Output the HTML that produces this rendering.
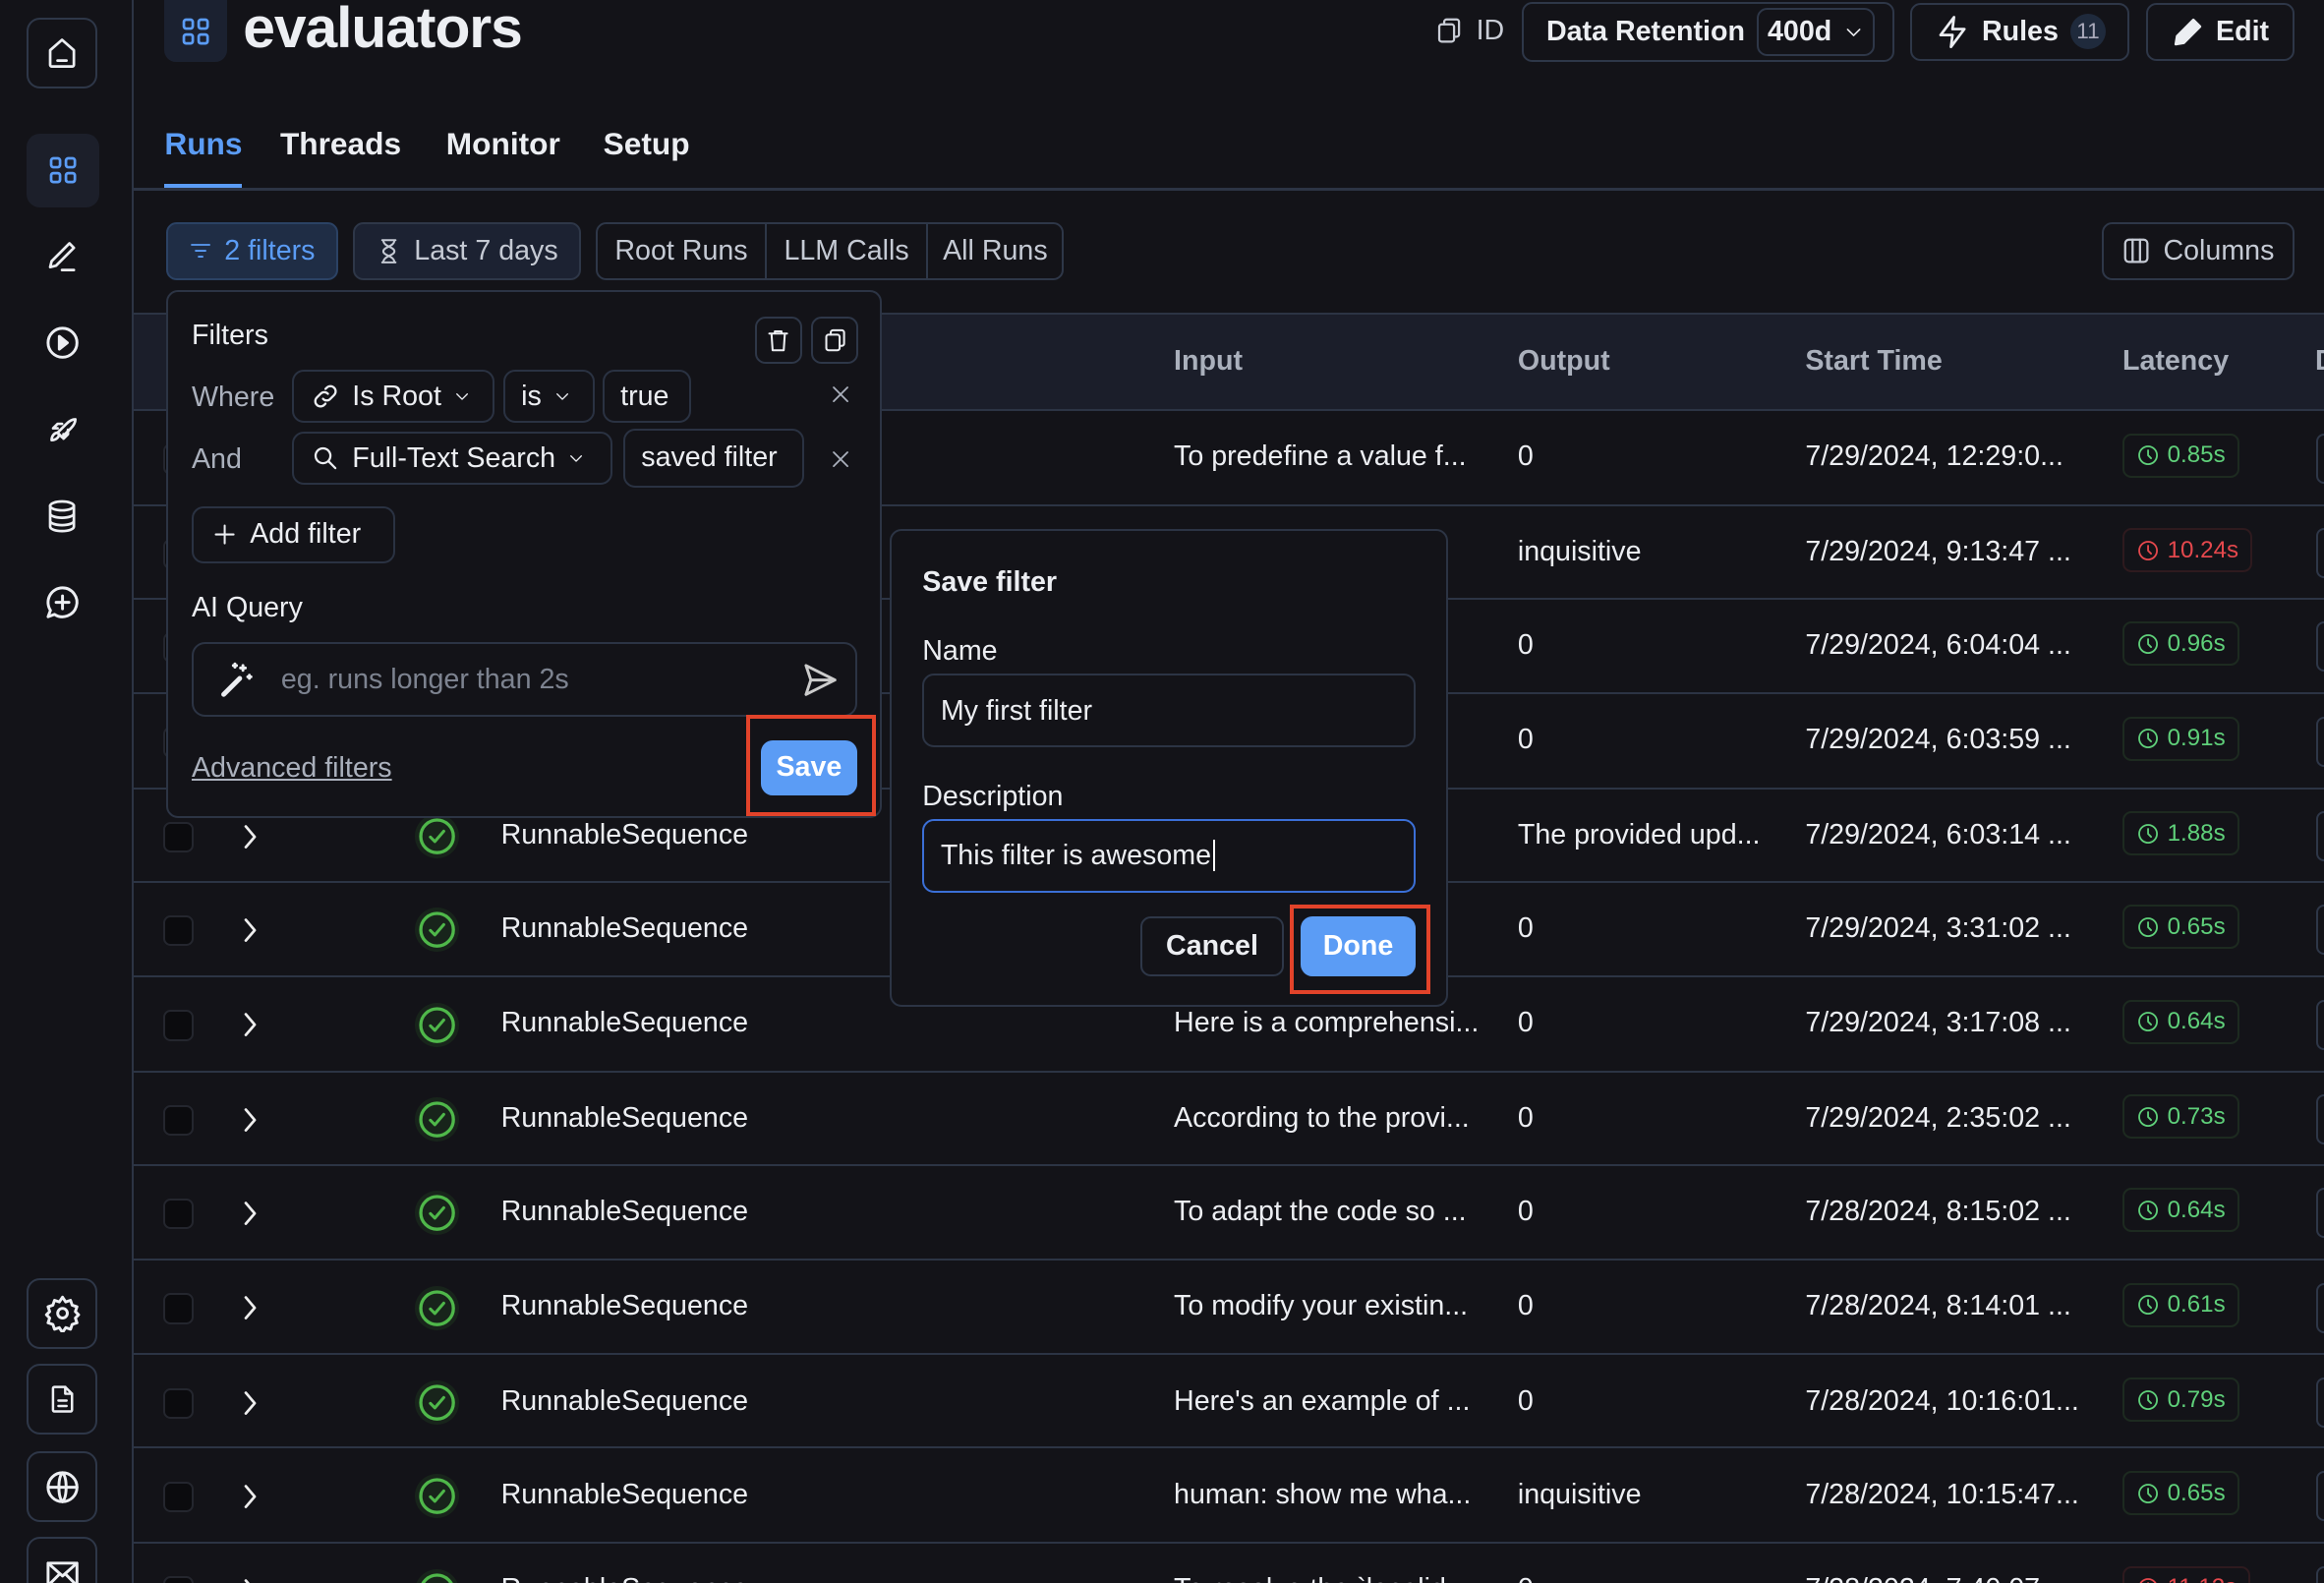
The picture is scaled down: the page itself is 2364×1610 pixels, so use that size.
<!DOCTYPE html>
<html><head><meta charset="utf-8"><style>
*{box-sizing:border-box;margin:0;padding:0}
html,body{width:2364px;height:1610px;overflow:hidden;background:#131318}
#w{zoom:1.50765;width:1568px;height:1068px;position:relative;font-family:"Liberation Sans",sans-serif;color:#eceef2;font-size:19px;overflow:hidden}
.a{position:absolute}
.side{left:0;top:0;width:90px;height:1068px;border-right:1.5px solid #2c3444;background:#131318}
.sb{position:absolute;left:18px;width:48px;height:48px;border:1.5px solid #2e3748;border-radius:9px;display:flex;align-items:center;justify-content:center}
.si{position:absolute;left:18px;width:48px;height:48px;display:flex;align-items:center;justify-content:center}
svg{fill:none;stroke:currentColor;stroke-width:1.8;stroke-linecap:round;stroke-linejoin:round}
.btn{position:absolute;border:1.5px solid #2e3748;border-radius:7px;display:flex;align-items:center;justify-content:center;gap:8px;white-space:nowrap}
.row{position:absolute;left:90px;width:1478px;height:64px;border-top:1.5px solid #2c3444}
.row>div{position:absolute;top:20px;white-space:nowrap}
.cb{left:20px!important;top:22px!important;width:21px;height:21px;border:1.5px solid #24262e;border-radius:5px;background:#0b0b0e}
.chev{left:72px!important;top:22px!important;color:#eee}
.ok{left:190px!important;top:17px!important;width:30px;height:30px;border-radius:50%;background:#18241b;display:flex;align-items:center;justify-content:center;color:#4fb84a}
.nm{left:248px}
.in{left:702px}
.out{left:934px}
.st{left:1128px}
.lat{left:1342px!important;top:15px!important;height:30px;padding:0 8px;border:1.5px solid #1d2a20;border-radius:6px;color:#5fd07a;font-size:16px;display:flex;align-items:center;gap:5px}
.lat.r{color:#e5484d;border-color:#2e1a1e}
.edge{left:1473px!important;top:15px!important;width:10px;height:34px;border:1.5px solid #2e3748;border-radius:6px}
.pill{position:absolute;height:36px;border:1.5px solid #2a3242;border-radius:8px;display:flex;align-items:center;padding:0 11px;gap:8px;white-space:nowrap}
.lbl{color:#aab0bc}
</style></head><body><div id="w">

<div class="a side">
 <div class="sb" style="top:12px"><svg width="24" height="24" viewBox="0 0 24 24"><path d="M4 10l8-7 8 7v10a1 1 0 0 1-1 1H5a1 1 0 0 1-1-1z"/><path d="M9 17h6"/></svg></div>
 <div class="si" style="top:90px;background:#1c1f2a;border-radius:9px;width:49px;height:50px;color:#5b9cf5"><svg width="24" height="24" viewBox="0 0 24 24"><rect x="4" y="4" width="6" height="6" rx="1.5"/><rect x="14" y="4" width="6" height="6" rx="1.5"/><rect x="4" y="14" width="6" height="6" rx="1.5"/><rect x="14" y="14" width="6" height="6" rx="1.5"/></svg></div>
 <div class="si" style="top:149px"><svg width="24" height="24" viewBox="0 0 24 24"><path d="M17 3l3 3L8 18l-4 1 1-4z"/><path d="M12 21h8"/></svg></div>
 <div class="si" style="top:207px"><svg width="26" height="26" viewBox="0 0 24 24"><circle cx="12" cy="12" r="9"/><path d="M10 8l5 4-5 4z" fill="currentColor"/></svg></div>
 <div class="si" style="top:266px"><svg width="24" height="24" viewBox="0 0 24 24"><path d="M5 19c0-3 2-5 4-5l1 1c0 2-2 4-5 4z"/><path d="M9 14l6-6c2-2 4-3 6-3 0 2-1 4-3 6l-6 6z"/><path d="M9 11H6l3-3h3M13 15v3l3-3v-3"/></svg></div>
 <div class="si" style="top:324px"><svg width="24" height="24" viewBox="0 0 24 24"><ellipse cx="12" cy="5" rx="8" ry="3"/><path d="M4 5v14c0 1.7 3.6 3 8 3s8-1.3 8-3V5M4 10c0 1.7 3.6 3 8 3s8-1.3 8-3M4 15c0 1.7 3.6 3 8 3s8-1.3 8-3"/></svg></div>
 <div class="si" style="top:382px"><svg width="26" height="26" viewBox="0 0 24 24"><path d="M12 3a9 9 0 1 1-5 16.5L3 21l1.5-4A9 9 0 0 1 12 3z"/><path d="M12 8v8M8 12h8"/></svg></div>
 <div class="sb" style="top:862px"><svg width="26" height="26" viewBox="0 0 24 24"><circle cx="12" cy="12" r="3"/><path d="M12 2l2 3 3-1 1 3 3 1-1 3 2 2-2 2 1 3-3 1-1 3-3-1-2 3-2-3-3 1-1-3-3-1 1-3-2-2 2-2-1-3 3-1 1-3 3 1z"/></svg></div>
 <div class="sb" style="top:920px"><svg width="22" height="24" viewBox="0 0 24 24"><path d="M6 3h8l5 5v12a1 1 0 0 1-1 1H6a1 1 0 0 1-1-1V4a1 1 0 0 1 1-1z"/><path d="M14 3v5h5M9 13h6M9 17h6"/></svg></div>
 <div class="sb" style="top:979px"><svg width="26" height="26" viewBox="0 0 24 24"><circle cx="12" cy="12" r="9"/><path d="M3 12h18M12 3c3 3 3 15 0 18M12 3c-3 3-3 15 0 18"/></svg></div>
 <div class="sb" style="top:1037px"><svg width="26" height="26" viewBox="0 0 24 24"><rect x="3" y="6" width="18" height="14" rx="1"/><path d="M3 6l9 8 9-8M3 20l7-7M21 20l-7-7"/></svg></div>
</div>

<div class="a" style="left:111px;top:0;width:42px;height:42px;background:#1b2130;border-radius:0 0 8px 8px;display:flex;align-items:center;justify-content:center;color:#5b9cf5"><svg width="24" height="24" viewBox="0 0 24 24"><rect x="4" y="4" width="6" height="6" rx="1.5"/><rect x="14" y="4" width="6" height="6" rx="1.5"/><rect x="4" y="14" width="6" height="6" rx="1.5"/><rect x="14" y="14" width="6" height="6" rx="1.5"/></svg></div>
<div class="a" style="left:164px;top:-3px;font-size:39px;font-weight:bold;letter-spacing:-0.7px">evaluators</div>
<div class="a" style="left:968px;top:10px;display:flex;gap:8px;align-items:center;color:#c9cdd6;font-size:19px"><svg width="20" height="20" viewBox="0 0 24 24"><rect x="4" y="7" width="12" height="14" rx="2"/><path d="M8 7V5a2 2 0 0 1 2-2h8a2 2 0 0 1 2 2v10a2 2 0 0 1-2 2h-2"/></svg>ID</div>
<div class="btn" style="left:1027px;top:1px;width:251px;height:41px;justify-content:flex-start;padding-left:15px;font-weight:bold;font-size:19px">Data Retention <span style="border:1.5px solid #2e3748;border-radius:7px;padding:4px 6px;display:flex;gap:8px;align-items:center">400d <svg width="14" height="14" viewBox="0 0 24 24"><path d="M5 9l7 7 7-7"/></svg></span></div>
<div class="btn" style="left:1289px;top:2px;width:148px;height:39px;font-weight:bold;font-size:19px"><svg width="24" height="26" viewBox="0 0 24 24"><path d="M13 2L4 14h8l-1 8 9-12h-8z"/></svg>Rules<span style="background:#1f2a3c;border-radius:50%;width:24px;height:24px;font-size:15px;font-weight:normal;display:flex;align-items:center;justify-content:center;color:#aab">11</span></div>
<div class="btn" style="left:1448px;top:2px;width:100px;height:39px;font-weight:bold;font-size:19px"><svg width="22" height="22" viewBox="0 0 24 24"><path d="M16 3l5 5L9 20l-6 1 1-6z" fill="currentColor"/></svg>Edit</div>

<div class="a" style="left:111px;top:85px;font-size:21px;font-weight:bold;color:#5b9cf5">Runs</div>
<div class="a" style="left:111px;top:124px;width:52px;height:4px;background:#5b9cf5"></div>
<div class="a" style="left:189px;top:85px;font-size:21px;font-weight:bold">Threads</div>
<div class="a" style="left:301px;top:85px;font-size:21px;font-weight:bold">Monitor</div>
<div class="a" style="left:407px;top:85px;font-size:21px;font-weight:bold">Setup</div>
<div class="a" style="left:90px;top:127px;width:1478px;height:1.5px;background:#2c3444"></div>

<div class="btn" style="left:112px;top:150px;width:116px;height:39px;background:#1f2d45;border-color:#2b4264;color:#5b9cf5;font-size:19px"><svg width="16" height="16" viewBox="0 0 24 24"><path d="M3 6h18M7 12h10M10 18h4"/></svg>2 filters</div>
<div class="btn" style="left:238px;top:150px;width:154px;height:39px;background:#1c2232;color:#c5cad4;font-size:19px"><svg width="18" height="22" viewBox="0 0 24 24"><path d="M6 2h12M6 22h12M7 2c0 6 10 6 10 10S7 16 7 22M17 2c0 6-10 6-10 10s10 4 10 10"/></svg>Last 7 days</div>
<div class="btn" style="left:402px;top:150px;width:316px;height:39px;gap:0;color:#c5cad4;font-size:19px;justify-content:flex-start">
 <span style="width:114px;height:100%;display:flex;align-items:center;justify-content:center;border-right:1.5px solid #2e3748">Root Runs</span><span style="width:109px;height:100%;display:flex;align-items:center;justify-content:center;border-right:1.5px solid #2e3748">LLM Calls</span><span style="flex:1;text-align:center">All Runs</span></div>
<div class="btn" style="left:1418px;top:150px;width:130px;height:39px;color:#c5cad4;font-size:19px"><svg width="20" height="20" viewBox="0 0 24 24"><rect x="3" y="3" width="18" height="18" rx="3"/><path d="M9 3v18M15 3v18"/></svg>Columns</div>

<div class="a" style="left:90px;top:211px;width:1478px;height:65px;background:#1b1e2a;border-top:1.5px solid #2c3444"></div>
<div class="a lbl" style="left:792px;top:233px;font-weight:bold">Input</div>
<div class="a lbl" style="left:1024px;top:233px;font-weight:bold">Output</div>
<div class="a lbl" style="left:1218px;top:233px;font-weight:bold">Start Time</div>
<div class="a lbl" style="left:1432px;top:233px;font-weight:bold">Latency</div>
<div class="a lbl" style="left:1562px;top:233px;font-weight:bold">D</div>

<div id="rows"></div>
<div class="row" style="top:276px"><div class="cb"></div><div class="chev"><svg width="14" height="20" viewBox="0 0 14 20"><path d="M4 3l6 7-6 7"/></svg></div><div class="ok"><svg width="30" height="30" viewBox="0 0 30 30"><circle cx="15" cy="15" r="11" stroke-width="2.2"/><path d="M10.5 15.5l3 3 6-7" stroke-width="2"/></svg></div><div class="nm">RunnableSequence</div><div class="in">To predefine a value f...</div><div class="out">0</div><div class="st">7/29/2024, 12:29:0...</div><div class="lat"><svg width="16" height="16" viewBox="0 0 24 24"><circle cx="12" cy="12" r="9"/><path d="M12 7v5l3 3"/></svg>0.85s</div><div class="edge"></div></div>
<div class="row" style="top:340px"><div class="cb"></div><div class="chev"><svg width="14" height="20" viewBox="0 0 14 20"><path d="M4 3l6 7-6 7"/></svg></div><div class="ok"><svg width="30" height="30" viewBox="0 0 30 30"><circle cx="15" cy="15" r="11" stroke-width="2.2"/><path d="M10.5 15.5l3 3 6-7" stroke-width="2"/></svg></div><div class="nm">RunnableSequence</div><div class="in">To use the ...r...</div><div class="out">inquisitive</div><div class="st">7/29/2024, 9:13:47 ...</div><div class="lat r"><svg width="16" height="16" viewBox="0 0 24 24"><circle cx="12" cy="12" r="9"/><path d="M12 7v5l3 3"/></svg>10.24s</div><div class="edge"></div></div>
<div class="row" style="top:403px"><div class="cb"></div><div class="chev"><svg width="14" height="20" viewBox="0 0 14 20"><path d="M4 3l6 7-6 7"/></svg></div><div class="ok"><svg width="30" height="30" viewBox="0 0 30 30"><circle cx="15" cy="15" r="11" stroke-width="2.2"/><path d="M10.5 15.5l3 3 6-7" stroke-width="2"/></svg></div><div class="nm">RunnableSequence</div><div class="in">To use the ...b...</div><div class="out">0</div><div class="st">7/29/2024, 6:04:04 ...</div><div class="lat"><svg width="16" height="16" viewBox="0 0 24 24"><circle cx="12" cy="12" r="9"/><path d="M12 7v5l3 3"/></svg>0.96s</div><div class="edge"></div></div>
<div class="row" style="top:467px"><div class="cb"></div><div class="chev"><svg width="14" height="20" viewBox="0 0 14 20"><path d="M4 3l6 7-6 7"/></svg></div><div class="ok"><svg width="30" height="30" viewBox="0 0 30 30"><circle cx="15" cy="15" r="11" stroke-width="2.2"/><path d="M10.5 15.5l3 3 6-7" stroke-width="2"/></svg></div><div class="nm">RunnableSequence</div><div class="in">To use the ...i...</div><div class="out">0</div><div class="st">7/29/2024, 6:03:59 ...</div><div class="lat"><svg width="16" height="16" viewBox="0 0 24 24"><circle cx="12" cy="12" r="9"/><path d="M12 7v5l3 3"/></svg>0.91s</div><div class="edge"></div></div>
<div class="row" style="top:531px"><div class="cb"></div><div class="chev"><svg width="14" height="20" viewBox="0 0 14 20"><path d="M4 3l6 7-6 7"/></svg></div><div class="ok"><svg width="30" height="30" viewBox="0 0 30 30"><circle cx="15" cy="15" r="11" stroke-width="2.2"/><path d="M10.5 15.5l3 3 6-7" stroke-width="2"/></svg></div><div class="nm">RunnableSequence</div><div class="in">To use the ...o...</div><div class="out">The provided upd...</div><div class="st">7/29/2024, 6:03:14 ...</div><div class="lat"><svg width="16" height="16" viewBox="0 0 24 24"><circle cx="12" cy="12" r="9"/><path d="M12 7v5l3 3"/></svg>1.88s</div><div class="edge"></div></div>
<div class="row" style="top:594px"><div class="cb"></div><div class="chev"><svg width="14" height="20" viewBox="0 0 14 20"><path d="M4 3l6 7-6 7"/></svg></div><div class="ok"><svg width="30" height="30" viewBox="0 0 30 30"><circle cx="15" cy="15" r="11" stroke-width="2.2"/><path d="M10.5 15.5l3 3 6-7" stroke-width="2"/></svg></div><div class="nm">RunnableSequence</div><div class="in">To use the ...a...</div><div class="out">0</div><div class="st">7/29/2024, 3:31:02 ...</div><div class="lat"><svg width="16" height="16" viewBox="0 0 24 24"><circle cx="12" cy="12" r="9"/><path d="M12 7v5l3 3"/></svg>0.65s</div><div class="edge"></div></div>
<div class="row" style="top:658px"><div class="cb"></div><div class="chev"><svg width="14" height="20" viewBox="0 0 14 20"><path d="M4 3l6 7-6 7"/></svg></div><div class="ok"><svg width="30" height="30" viewBox="0 0 30 30"><circle cx="15" cy="15" r="11" stroke-width="2.2"/><path d="M10.5 15.5l3 3 6-7" stroke-width="2"/></svg></div><div class="nm">RunnableSequence</div><div class="in">Here is a comprehensi...</div><div class="out">0</div><div class="st">7/29/2024, 3:17:08 ...</div><div class="lat"><svg width="16" height="16" viewBox="0 0 24 24"><circle cx="12" cy="12" r="9"/><path d="M12 7v5l3 3"/></svg>0.64s</div><div class="edge"></div></div>
<div class="row" style="top:722px"><div class="cb"></div><div class="chev"><svg width="14" height="20" viewBox="0 0 14 20"><path d="M4 3l6 7-6 7"/></svg></div><div class="ok"><svg width="30" height="30" viewBox="0 0 30 30"><circle cx="15" cy="15" r="11" stroke-width="2.2"/><path d="M10.5 15.5l3 3 6-7" stroke-width="2"/></svg></div><div class="nm">RunnableSequence</div><div class="in">According to the provi...</div><div class="out">0</div><div class="st">7/29/2024, 2:35:02 ...</div><div class="lat"><svg width="16" height="16" viewBox="0 0 24 24"><circle cx="12" cy="12" r="9"/><path d="M12 7v5l3 3"/></svg>0.73s</div><div class="edge"></div></div>
<div class="row" style="top:785px"><div class="cb"></div><div class="chev"><svg width="14" height="20" viewBox="0 0 14 20"><path d="M4 3l6 7-6 7"/></svg></div><div class="ok"><svg width="30" height="30" viewBox="0 0 30 30"><circle cx="15" cy="15" r="11" stroke-width="2.2"/><path d="M10.5 15.5l3 3 6-7" stroke-width="2"/></svg></div><div class="nm">RunnableSequence</div><div class="in">To adapt the code so ...</div><div class="out">0</div><div class="st">7/28/2024, 8:15:02 ...</div><div class="lat"><svg width="16" height="16" viewBox="0 0 24 24"><circle cx="12" cy="12" r="9"/><path d="M12 7v5l3 3"/></svg>0.64s</div><div class="edge"></div></div>
<div class="row" style="top:849px"><div class="cb"></div><div class="chev"><svg width="14" height="20" viewBox="0 0 14 20"><path d="M4 3l6 7-6 7"/></svg></div><div class="ok"><svg width="30" height="30" viewBox="0 0 30 30"><circle cx="15" cy="15" r="11" stroke-width="2.2"/><path d="M10.5 15.5l3 3 6-7" stroke-width="2"/></svg></div><div class="nm">RunnableSequence</div><div class="in">To modify your existin...</div><div class="out">0</div><div class="st">7/28/2024, 8:14:01 ...</div><div class="lat"><svg width="16" height="16" viewBox="0 0 24 24"><circle cx="12" cy="12" r="9"/><path d="M12 7v5l3 3"/></svg>0.61s</div><div class="edge"></div></div>
<div class="row" style="top:913px"><div class="cb"></div><div class="chev"><svg width="14" height="20" viewBox="0 0 14 20"><path d="M4 3l6 7-6 7"/></svg></div><div class="ok"><svg width="30" height="30" viewBox="0 0 30 30"><circle cx="15" cy="15" r="11" stroke-width="2.2"/><path d="M10.5 15.5l3 3 6-7" stroke-width="2"/></svg></div><div class="nm">RunnableSequence</div><div class="in">Here's an example of ...</div><div class="out">0</div><div class="st">7/28/2024, 10:16:01...</div><div class="lat"><svg width="16" height="16" viewBox="0 0 24 24"><circle cx="12" cy="12" r="9"/><path d="M12 7v5l3 3"/></svg>0.79s</div><div class="edge"></div></div>
<div class="row" style="top:976px"><div class="cb"></div><div class="chev"><svg width="14" height="20" viewBox="0 0 14 20"><path d="M4 3l6 7-6 7"/></svg></div><div class="ok"><svg width="30" height="30" viewBox="0 0 30 30"><circle cx="15" cy="15" r="11" stroke-width="2.2"/><path d="M10.5 15.5l3 3 6-7" stroke-width="2"/></svg></div><div class="nm">RunnableSequence</div><div class="in">human: show me wha...</div><div class="out">inquisitive</div><div class="st">7/28/2024, 10:15:47...</div><div class="lat"><svg width="16" height="16" viewBox="0 0 24 24"><circle cx="12" cy="12" r="9"/><path d="M12 7v5l3 3"/></svg>0.65s</div><div class="edge"></div></div>
<div class="row" style="top:1040px"><div class="cb"></div><div class="chev"><svg width="14" height="20" viewBox="0 0 14 20"><path d="M4 3l6 7-6 7"/></svg></div><div class="ok"><svg width="30" height="30" viewBox="0 0 30 30"><circle cx="15" cy="15" r="11" stroke-width="2.2"/><path d="M10.5 15.5l3 3 6-7" stroke-width="2"/></svg></div><div class="nm">RunnableSequence</div><div class="in">To resolve the `localid...</div><div class="out">0</div><div class="st">7/28/2024, 7:40:07 ...</div><div class="lat r"><svg width="16" height="16" viewBox="0 0 24 24"><circle cx="12" cy="12" r="9"/><path d="M12 7v5l3 3"/></svg>11.12s</div><div class="edge"></div></div>

<div class="a" style="left:112px;top:196px;width:483px;height:356px;background:#131318;border:1.5px solid #2c3444;border-radius:8px">
 <div class="a" style="left:16px;top:18px">Filters</div>
 <div class="btn" style="left:396px;top:16px;width:32px;height:32px"><svg width="18" height="20" viewBox="0 0 24 24"><path d="M4 6h16M9 6V4h6v2M6 6l1 15h10l1-15"/></svg></div>
 <div class="btn" style="left:434px;top:16px;width:32px;height:32px"><svg width="18" height="20" viewBox="0 0 24 24"><rect x="4" y="7" width="12" height="14" rx="2"/><path d="M8 7V5a2 2 0 0 1 2-2h8a2 2 0 0 1 2 2v10a2 2 0 0 1-2 2h-2"/></svg></div>
 <div class="a lbl" style="left:16px;top:60px">Where</div>
 <div class="pill" style="left:84px;top:52px;width:136px"><svg width="20" height="20" viewBox="0 0 24 24"><path d="M10 14a4 4 0 0 0 6 0l3-3a4 4 0 0 0-6-6l-1 1M14 10a4 4 0 0 0-6 0l-3 3a4 4 0 0 0 6 6l1-1"/></svg>Is Root<svg width="12" height="12" viewBox="0 0 24 24"><path d="M5 9l7 7 7-7"/></svg></div>
 <div class="pill" style="left:226px;top:52px;width:62px">is<svg width="12" height="12" viewBox="0 0 24 24"><path d="M5 9l7 7 7-7"/></svg></div>
 <div class="pill" style="left:293px;top:52px;width:60px">true</div>
 <div class="a" style="left:446px;top:60px;color:#aab0bc"><svg width="16" height="16" viewBox="0 0 24 24"><path d="M5 5l14 14M19 5L5 19"/></svg></div>
 <div class="a lbl" style="left:16px;top:102px">And</div>
 <div class="pill" style="left:84px;top:94px;width:216px"><svg width="20" height="20" viewBox="0 0 24 24" stroke-width="2.4"><circle cx="10" cy="10" r="6"/><path d="M15 15l5 5"/></svg>Full-Text Search<svg width="12" height="12" viewBox="0 0 24 24"><path d="M5 9l7 7 7-7"/></svg></div>
 <div class="pill" style="left:307px;top:92px;width:122px;height:40px;align-items:flex-start;padding-top:7px">saved filter</div>
 <div class="a" style="left:446px;top:104px;color:#aab0bc"><svg width="16" height="16" viewBox="0 0 24 24"><path d="M5 5l14 14M19 5L5 19"/></svg></div>
 <div class="pill" style="left:16px;top:144px;width:137px;height:39px;padding:0 12px"><svg width="18" height="18" viewBox="0 0 24 24"><path d="M12 4v16M4 12h16"/></svg>Add filter</div>
 <div class="a" style="left:16px;top:202px">AI Query</div>
 <div class="a" style="left:16px;top:236px;width:449px;height:50px;border:1.5px solid #2c3444;border-radius:9px">
  <div class="a" style="left:16px;top:11px"><svg width="26" height="26" viewBox="0 0 24 24"><path d="M4 21l10-10" stroke-width="3"/><path d="M16 3v3M14.5 4.5h3M20 9v2M19 10h2M11 2v2M10 3h2"/></svg></div>
  <div class="a" style="left:59px;top:13px;color:#7d8390">eg. runs longer than 2s</div>
  <div class="a" style="left:410px;top:11px;color:#ccc"><svg width="26" height="26" viewBox="0 0 24 24"><path d="M3 3l18 9-18 9 3-9zM6 12h15"/></svg></div>
 </div>
 <div class="a" style="left:16px;top:310px;color:#aab0bc;text-decoration:underline">Advanced filters</div>
 <div class="a" style="left:390px;top:285px;width:88px;height:68px;border:3px solid #e2432a"></div>
 <div class="a" style="left:400px;top:302px;width:65px;height:37px;background:#5b9cf5;border-radius:8px;font-weight:bold;color:#fff;display:flex;align-items:center;justify-content:center">Save</div>
</div>

<div class="a" style="left:600px;top:357px;width:377px;height:322px;background:#131318;border:1.5px solid #2c3444;border-radius:8px">
 <div class="a" style="left:21px;top:24px;font-weight:bold">Save filter</div>
 <div class="a" style="left:21px;top:70px">Name</div>
 <div class="a" style="left:21px;top:96px;width:333px;height:50px;border:1.5px solid #2c3444;border-radius:8px;padding:13px 11px">My first filter</div>
 <div class="a" style="left:21px;top:168px">Description</div>
 <div class="a" style="left:21px;top:194px;width:333px;height:50px;border:1.5px solid #3b6fd6;border-radius:8px;padding:13px 11px">This filter is awesome<span style="border-left:1.5px solid #fff;margin-left:1px"></span></div>
 <div class="btn" style="left:168px;top:260px;width:97px;height:40px;font-weight:bold">Cancel</div>
 <div class="a" style="left:269px;top:252px;width:95px;height:60px;border:3px solid #e2432a"></div>
 <div class="a" style="left:276px;top:260px;width:78px;height:40px;background:#5b9cf5;border-radius:8px;font-weight:bold;color:#fff;display:flex;align-items:center;justify-content:center">Done</div>
</div>

</div></body></html>
